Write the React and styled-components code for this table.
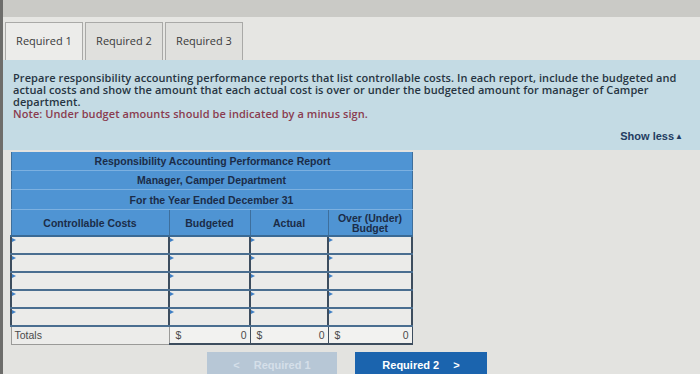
import React from "react";
import styled, { createGlobalStyle } from "styled-components";

const GlobalStyle = createGlobalStyle`
  html, body {
    margin: 0;
    padding: 0;
    background: #e3e3e0;
  }
  body {
    width: 700px;
    height: 374px;
    overflow: hidden;
    font-family: "Open Sans", "DejaVu Sans", sans-serif;
  }
`;

const Page = styled.div`
  width: 700px;
  height: 374px;
  overflow: hidden;
  background: #e3e3e0;
  border-left: 3px solid #6d6d6b;
  box-sizing: border-box;
`;

const TopBar = styled.div`
  height: 17px;
  background: #cacac6;
`;

const TabStrip = styled.div`
  height: 43px;
  display: flex;
  align-items: flex-end;
  gap: 2px;
  padding-left: 2px;
  background: #e6e6e3;
`;

const Tab = styled.div`
  width: 78px;
  height: 38px;
  box-sizing: border-box;
  display: flex;
  align-items: center;
  justify-content: center;
  padding-bottom: 2px;
  border: 1px solid #a9a9a7;
  border-bottom: none;
  background: ${({ active }) => (active ? "#ececea" : "#e0e0dd")};
  color: #3a3a3a;
  font-size: 11px;
`;

const InfoPanel = styled.div`
  height: 90px;
  box-sizing: border-box;
  padding: 12px 10px 0 10px;
  background: #c4dbe4;
`;

const Instructions = styled.p`
  margin: 0;
  font-size: 11px;
  font-weight: 600;
  line-height: 12px;
  letter-spacing: 0.07px;
  color: #273542;
`;

const Note = styled.p`
  margin: 0;
  font-size: 11px;
  font-weight: 600;
  line-height: 12px;
  letter-spacing: 0.07px;
  color: #8a3b4f;
`;

const ShowLess = styled.div`
  display: flex;
  justify-content: flex-end;
  align-items: center;
  margin-top: 10px;
  padding-right: 7px;
  font-family: "Liberation Sans", Arial, sans-serif;
  font-weight: bold;
  font-size: 11px;
  color: #1f3b61;

  span {
    font-size: 8px;
    margin-left: 1px;
  }
`;

const Body = styled.div`
  padding: 2px 0 0 7px;
`;

const Report = styled.table`
  border-collapse: collapse;
  table-layout: fixed;
  width: 401px;
  font-family: "Liberation Sans", Arial, sans-serif;
  font-size: 10.5px;
`;

const TitleCell = styled.th`
  height: ${({ h }) => h}px;
  padding: 0 0 0 ${({ indent }) => indent || 0}px;
  background: #4f94d3;
  color: #1b2c48;
  font-weight: bold;
  text-align: center;
  border-bottom: 1px solid #7cb0e0;
  border-left: 1px solid #3e6f9c;
  border-right: 1px solid #3e6f9c;
`;

const HeadCell = styled.th`
  height: 25px;
  padding: 0 2px;
  background: #4f94d3;
  color: #1b2c48;
  font-weight: bold;
  line-height: 10px;
  text-align: center;
  border: 1px solid #3e6f9c;
  border-bottom: 2px solid #3a6a95;
`;

const DataCell = styled.td`
  height: 16px;
  padding: 0;
  position: relative;
  background: #ebebe9;
  border-left: 2px solid #3d4d5e;
  border-right: 2px solid #3d4d5e;
  border-bottom: 2.5px solid #4a6e90;

  &::before {
    content: "";
    position: absolute;
    top: 1px;
    left: 0;
    border-top: 2.5px solid transparent;
    border-bottom: 2.5px solid transparent;
    border-left: 4px solid #3f7fc4;
  }
`;

const TotalLabel = styled.td`
  height: 16px;
  padding: 0 3px;
  background: #ececea;
  color: #4a4a4a;
  border: 1px solid #9a9a98;
  border-top: none;
`;

const TotalCell = styled.td`
  height: 16px;
  padding: 0 3px;
  background: #f2f2f0;
  color: #4a4a4a;
  border-left: 1px solid #3d4d5e;
  border-right: 1px solid #3d4d5e;
  border-bottom: 2px solid #3d4d5e;

  div {
    display: flex;
    justify-content: space-between;
    padding-left: 3px;
  }
`;

const NavRow = styled.div`
  display: flex;
  gap: 18px;
  margin: 7px 0 0 197px;
`;

const NavButton = styled.div`
  width: ${({ w }) => w}px;
  height: 24px;
  display: flex;
  align-items: center;
  justify-content: center;
  gap: 14px;
  font-family: "Liberation Sans", Arial, sans-serif;
  font-weight: bold;
  font-size: 11px;
  color: ${({ disabled }) => (disabled ? "#d5dfe9" : "#ffffff")};
  background: ${({ disabled }) => (disabled ? "#b7c7d6" : "#1b64ae")};
  padding-top: 2px;
  box-sizing: border-box;
`;

const rows = [0, 1, 2, 3, 4];

export default function App() {
  return (
    <>
      <GlobalStyle />
      <Page>
        <TopBar />
        <TabStrip>
          <Tab active>Required 1</Tab>
          <Tab>Required 2</Tab>
          <Tab>Required 3</Tab>
        </TabStrip>
        <InfoPanel>
          <Instructions>
            Prepare responsibility accounting performance reports that list
            controllable costs. In each report, include the budgeted and
            <br />
            actual costs and show the amount that each actual cost is over or
            under the budgeted amount for manager of Camper
            <br />
            department.
          </Instructions>
          <Note>Note: Under budget amounts should be indicated by a minus sign.</Note>
          <ShowLess>
            Show less<span>▲</span>
          </ShowLess>
        </InfoPanel>
        <Body>
          <Report>
            <colgroup>
              <col style={{ width: 158 }} />
              <col style={{ width: 81 }} />
              <col style={{ width: 78 }} />
              <col style={{ width: 84 }} />
            </colgroup>
            <thead>
              <tr>
                <TitleCell colSpan={4} h={18} indent={2}>
                  Responsibility Accounting Performance Report
                </TitleCell>
              </tr>
              <tr>
                <TitleCell colSpan={4} h={18}>
                  Manager, Camper Department
                </TitleCell>
              </tr>
              <tr>
                <TitleCell colSpan={4} h={19}>
                  For the Year Ended December 31
                </TitleCell>
              </tr>
              <tr>
                <HeadCell>Controllable Costs</HeadCell>
                <HeadCell>Budgeted</HeadCell>
                <HeadCell>Actual</HeadCell>
                <HeadCell>
                  Over (Under)
                  <br />
                  Budget
                </HeadCell>
              </tr>
            </thead>
            <tbody>
              {rows.map((r) => (
                <tr key={r}>
                  <DataCell />
                  <DataCell />
                  <DataCell />
                  <DataCell />
                </tr>
              ))}
              <tr>
                <TotalLabel>Totals</TotalLabel>
                <TotalCell>
                  <div>
                    <span>$</span>
                    <span>0</span>
                  </div>
                </TotalCell>
                <TotalCell>
                  <div>
                    <span>$</span>
                    <span>0</span>
                  </div>
                </TotalCell>
                <TotalCell>
                  <div>
                    <span>$</span>
                    <span>0</span>
                  </div>
                </TotalCell>
              </tr>
            </tbody>
          </Report>
          <NavRow>
            <NavButton w={130} disabled>
              <span>&lt;</span>
              <span>Required 1</span>
            </NavButton>
            <NavButton w={132}>
              <span>Required 2</span>
              <span>&gt;</span>
            </NavButton>
          </NavRow>
        </Body>
      </Page>
    </>
  );
}
